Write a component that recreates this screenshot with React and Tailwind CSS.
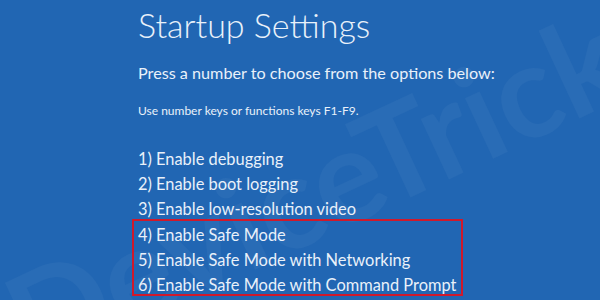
const items = [
  "1) Enable debugging",
  "2) Enable boot logging",
  "3) Enable low-resolution video",
];

const safeItems = [
  "4) Enable Safe Mode",
  "5) Enable Safe Mode with Networking",
  "6) Enable Safe Mode with Command Prompt",
];

const App = () => {
  return (
    <div
      className="relative w-[600px] h-[300px] overflow-hidden bg-[#2166b3] text-[#e9f1fa]"
      style={{ fontFamily: 'Lato, "Open Sans", sans-serif' }}
    >
      {/* watermark */}
      <div className="absolute left-[14px] top-[262px] -rotate-[25deg] origin-left text-[130px] font-bold leading-none text-white/[0.04] whitespace-nowrap select-none">
        DeviceTricks
      </div>

      <div className="relative pl-[138px] pt-[5px]">
        <h1 className="text-[34px] font-light leading-[40px]">
          Startup Settings
        </h1>
        <p className="mt-[16px] text-[16.2px] font-normal leading-[24px]">
          Press a number to choose from the options below:
        </p>
        <p className="mt-[18px] text-[12px] font-normal leading-[16px]">
          Use number keys or functions keys F1-F9.
        </p>

        <div className="mt-[27px] flex flex-col">
          {items.map((t) => (
            <div key={t} className="h-[25px] text-[16.4px] font-normal leading-[25px]">
              {t}
            </div>
          ))}
          <div className="-ml-[6px] mt-[-2px] w-[331px] h-[77px] border-2 border-[#d0192b] pl-[4px] pt-[1px]">
            {safeItems.map((t) => (
              <div key={t} className="h-[25px] text-[16.4px] font-normal leading-[25px] whitespace-nowrap">
                {t}
              </div>
            ))}
          </div>
        </div>
      </div>
    </div>
  );
};

export default App;
